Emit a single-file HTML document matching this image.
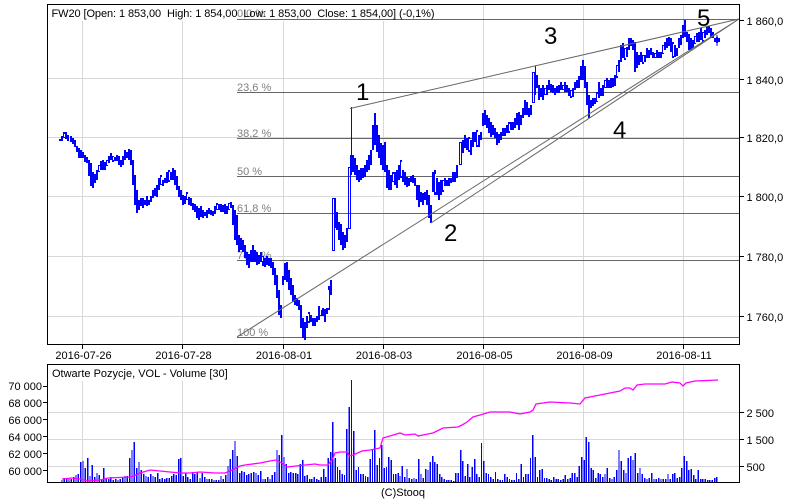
<!DOCTYPE html>
<html><head><meta charset="utf-8"><style>
html,body{margin:0;padding:0;background:#fff;width:800px;height:500px;overflow:hidden}
svg{display:block}
text{font-family:"Liberation Sans",Arial,sans-serif;font-size:11px;fill:#000;white-space:pre}
.f{fill:#808080}
.n{font-size:24px}
</style></head><body>
<svg width="800" height="500" viewBox="0 0 800 500">
<rect width="800" height="500" fill="#fff"/>
<!-- main grid -->
<path d="M82.5 5V344M182.5 5V344M283.5 5V344M383.5 5V344M483.5 5V344M583.5 5V344M683.5 5V344M48 78.5H739M48 137.5H739M48 196.5H739M48 256.5H739M48 316.5H739" stroke="#d8d8d8" stroke-width="1" fill="none"/>
<rect x="48" y="5" width="388" height="16" fill="#fff"/>
<!-- fib -->
<path d="M237 19.5H739M237 92.5H739M237 138.5H739M237 176.5H739M237 213.5H739M237 260.5H739M237 337.5H739" stroke="#666" stroke-width="1" fill="none"/>
<text class="f" x="237" y="17">0,0 %</text>
<text class="f" x="237" y="91">23,6 %</text>
<text class="f" x="237" y="137">38,2 %</text>
<text class="f" x="237" y="175">50 %</text>
<text class="f" x="237" y="212">61,8 %</text>
<text class="f" x="237" y="259">76,4 %</text>
<text class="f" x="237" y="336">100 %</text>
<!-- price -->
<path shape-rendering="crispEdges" fill="none" stroke="#0000ff" stroke-width="2" d="M60 139V141M62 136V141M64 132V138M66 132V139M68 135V141M71 136V142M73 138V144M75 140V147M77 146V152M79 148V158M81 150V158M83 152V158M85 155V162M87 157V163M89 160V176M91 163V186M93 172V188M95 174V183M97 170V180M99 165V172M101 161V170M103 160V170M105 162V170M107 160V166M109 156V163M111 153V160M113 156V162M115 157V161M117 155V161M119 156V165M121 160V167M123 156V165M125 150V160M127 152V158M129 149V160M131 150V165M133 160V185M135 175V205M137 190V213M139 200V210M141 198V206M143 198V208M145 200V205M147 196V206M149 200V205M151 196V202M153 190V198M155 188V196M157 185V197M159 178V190M161 175V185M163 180V186M165 178V183M167 172V183M169 170V182M171 172V180M173 168V180M175 170V185M177 176V190M179 186V197M181 190V200M183 195V205M185 196V204M187 192V200M189 197V205M191 198V206M193 203V210M195 204V212M197 206V218M199 208V220M201 206V217M203 210V218M205 212V216M207 210V218M209 208V214M211 210V215M213 211V216M215 206V214M217 203V210M219 204V210M221 204V212M223 205V212M225 204V214M227 206V214M229 203V210M231 202V208M233 205V225M235 210V240M237 215V245M239 235V252M241 238V250M243 240V252M245 245V258M247 252V265M249 254V268M251 250V262M253 245V262M255 250V262M257 252V265M259 255V264M261 252V262M263 256V266M265 258V267M267 256V265M269 258V266M271 258V268M273 262V275M275 268V285M277 275V298M279 290V315M281 305V318M283 276V285M285 263V280M287 262V282M289 270V290M291 278V295M293 285V302M295 295V305M297 298V306M299 300V310M301 305V328M303 318V338M305 322V340M307 316V328M309 312V323M311 315V322M313 318V326M315 318V326M317 316V322M319 306V320M321 310V316M323 308V316M325 309V322M327 308V314M329 286V310M331 280V295"/>
<path shape-rendering="crispEdges" fill="none" stroke="#0000ff" stroke-width="2" d="M335 198V228M337 212V230M339 222V240M341 224V245M343 232V250M345 235V248M347 228V242M351 155V175M353 155V172M355 158V175M357 165V180M359 170V182M361 168V180M363 168V178M365 165V177M367 160V172M369 155V170M371 150V165M373 125V150M375 113V145M377 125V152M379 135V158M381 143V165M383 145V170M385 142V172M387 165V188M389 170V190M391 175V190M393 172V182M395 172V185M397 170V188M399 165V180M401 160V178M403 170V182M405 172V185M407 177V187M409 178V186M411 176V182M413 175V183M415 178V186M417 185V200M419 185V207M421 192V202M423 193V205M425 192V200M427 190V205M429 195V218M431 205V223M433 172V192M435 170V195M437 178V195M439 182V200M441 180V195M443 180V192M445 178V186M447 180V186M449 178V186M451 178V183M453 172V182M455 172V182M457 165V178M463 140V153M465 135V148M467 138V150M469 137V152M471 140V155M473 132V147M475 132V142M477 130V147M479 135V147M481 132V140M483 113V126M485 110V125M487 115V128M489 118V133M491 122V137M493 125V135M495 128V138M497 132V145M499 134V143M501 132V140M503 128V136M505 128V136M507 125V133M509 122V133M511 122V130M513 122V130M515 118V128M517 113V125M519 112V130M521 115V125M523 108V118M525 100V115M527 102V115M529 108V117M531 105V115M535 75V95M537 75V88M539 85V100M541 88V97M543 85V100M545 88V95M547 85V95M549 80V90M551 84V92M553 85V93M555 88V95M557 86V93M559 85V93M561 82V90M563 85V90M565 82V92M567 85V92M569 88V96M571 90V98M573 88V97M575 82V90M577 80V88M579 76V88M581 66V80M583 60V80M585 66V88M587 82V105M589 95V118M591 100V108M593 98V106M595 98V104M597 92V102M599 82V98M601 88V96M603 85V96M605 80V88M607 78V88M609 80V88M611 78V88M613 78V87M615 75V86M617 65V78M619 60V72M621 45V62M623 43V58M625 48V60M627 47V57M629 38V50M631 38V46M633 40V50M635 42V72M637 52V68M639 55V65M641 52V62M643 55V64M645 55V62M647 48V58M649 50V58M651 48V55M653 52V58M655 53V58M657 50V58M659 52V58M661 52V58M663 45V54M665 42V50M667 38V48M669 37V46M671 38V52M673 42V58M675 45V57M677 48V56M679 38V48M681 35V45M683 25V38M685 20V37M687 32V42M689 34V50M691 38V50M693 40V48M695 36V44M697 33V42M699 32V42M701 28V40M703 32V42M705 30V38M707 26V35M709 26V33M711 28V38M713 32V38M715 38V42M717 37V43M719 38V42"/>
<path shape-rendering="crispEdges" fill="none" stroke="#0000ff" stroke-width="1" d="M332.5 198.5h2v52h-2zM348.5 167.5h2v61h-2zM459.5 142.5h2v22h-2zM532.5 72.5h2v30h-2zM717 35V46M351.5 107V155M535.5 66V75"/>
<!-- hollow candle centres -->
<path shape-rendering="crispEdges" fill="none" stroke="#fff" stroke-width="1" d="M64.5 134V137M99.5 166V171M107.5 161V165M113.500 157V160M161.500 177V184M169.500 172V180M187.500 194V199M217.500 205V209M229.500 204V209M262.500 257V261M308.500 314V321M320.500 307V315M328.500 290V308M393.500 174V181M401.500 162V176M435.500 174V192M443.500 181V190M469.500 139V150M477.500 132V145M509.500 124V131M545.500 89V94M563.500 86V89M571.500 91V96M597.500 94V101M605.500 81V87M617.500 66V76M625.500 49V58M643.500 56V62M655.500 54V57M663.500 46V53M673.500 44V56M695.500 37V43M703.500 33V40"/>
<!-- trend lines -->
<path d="M350 108.5L739 19M237 337L739 19M431 223L739 19" stroke="#666" stroke-width="1" fill="none"/>
<!-- frame -->
<rect x="47.5" y="4.5" width="692" height="340" fill="none" stroke="#000"/>
<path d="M82.5 345V349M182.5 345V349M283.5 345V349M383.5 345V349M483.5 345V349M583.5 345V349M683.5 345V349M740 20.5H744M740 79.5H744M740 137.5H744M740 196.5H744M740 256.5H744M740 316.5H744" stroke="#000" fill="none"/>
<text x="51.5" y="17" textLength="383" lengthAdjust="spacing">FW20 [Open: 1 853,00  High: 1 854,00  Low: 1 853,00  Close: 1 854,00] (-0,1%)</text>
<text x="746.500" y="25">1 860,0</text>
<text x="746.500" y="84">1 840,0</text>
<text x="746.500" y="142">1 820,0</text>
<text x="746.500" y="201">1 800,0</text>
<text x="746.500" y="261">1 780,0</text>
<text x="746.500" y="321">1 760,0</text>
<text x="83.5" y="359" text-anchor="middle">2016-07-26</text>
<text x="183.5" y="359" text-anchor="middle">2016-07-28</text>
<text x="284" y="359" text-anchor="middle">2016-08-01</text>
<text x="384" y="359" text-anchor="middle">2016-08-03</text>
<text x="484.500" y="359" text-anchor="middle">2016-08-05</text>
<text x="584.500" y="359" text-anchor="middle">2016-08-09</text>
<text x="684" y="359" text-anchor="middle">2016-08-11</text>
<!-- wave numbers -->
<text class="n" x="356" y="100">1</text>
<text class="n" x="444" y="241">2</text>
<text class="n" x="544" y="44">3</text>
<text class="n" x="613" y="138">4</text>
<text class="n" x="697" y="26">5</text>
<!-- lower panel -->
<path d="M82.5 365V482M182.5 365V482M283.5 365V482M383.5 365V482M483.5 365V482M583.5 365V482M683.5 365V482M48 412.500H739M48 439.500H739M48 466.500H739" stroke="#d8d8d8" fill="none"/>
<rect x="48" y="365" width="180" height="16" fill="#fff"/>
<path shape-rendering="crispEdges" fill="none" stroke="#0000ff" stroke-width="1.4" d="M62 482v-2v2m2.33 0v-4v4m2.33 0v-3v3m2.33 0v-4v4m2.33 0v-3v3m2.33 0v-5v5m2.33 0v-7v7m2.33 0v-8v8m2.33 0v-20v20m2.33 0v-21v21m2.33 0v-14v14m2.33 0v-24v24m2.33 0v-6v6m2.33 0v-17v17m2.33 0v-5v5m2.33 0v-9v9m2.33 0v-7v7m2.33 0v-3v3m2.33 0v-14v14m2.33 0v-3v3m2.33 0v-3v3m2.33 0v-5v5m2.33 0v-2v2m2.33 0v-3v3
M118 482v-2v2m2.33 0v-3v3m2.33 0v-5v5m2.33 0v-6v6m2.33 0v-6v6m2.33 0v-24v24m2.33 0v-32v32m2.33 0v-40v40m2.33 0v-14v14m2.33 0v-20v20m2.33 0v-12v12m2.33 0v-8v8m2.33 0v-6v6m2.33 0v-5v5m2.33 0v-8v8m2.33 0v-6v6m2.33 0v-5v5m2.33 0v-9v9m2.33 0v-3v3m2.33 0v-4v4m2.33 0v-3v3m2.33 0v-4v4m2.33 0v-4v4m2.33 0v-6v6m2.33 0v-8v8m2.33 0v-7v7m2.33 0v-23v23m2.33 0v-24v24m2.33 0v-6v6m2.33 0v-9v9m2.33 0v-5v5m2.33 0v-3v3m2.33 0v-10v10m2.33 0v-8v8m2.33 0v-10v10
M200 482v-4v4m2.33 0v-9v9m2.33 0v-5v5m2.33 0v-3v3m2.33 0v-3v3m2.33 0v-3v3m2.33 0v-2v2m2.33 0v-2v2m2.33 0v-2v2m2.33 0v-6v6m2.33 0v-3v3m2.33 0v-7v7m2.33 0v-16v16m2.33 0v-23v23m2.33 0v-32v32m2.33 0v-41v41m2.33 0v-26v26m2.33 0v-9v9m2.33 0v-11v11m2.33 0v-10v10m2.33 0v-7v7m2.33 0v-8v8m2.33 0v-9v9m2.33 0v-10v10
M256 482v-9v9m2.33 0v-7v7m2.33 0v-11v11m2.33 0v-3v3m2.33 0v-3v3m2.33 0v-5v5m2.33 0v-3v3m2.33 0v-7v7m2.33 0v-10v10m2.33 0v-32v32m2.33 0v-27v27m2.33 0v-47v47m2.33 0v-25v25m2.33 0v-18v18m2.33 0v-9v9m2.33 0v-10v10m2.33 0v-9v9m2.33 0v-9v9m2.33 0v-8v8m2.33 0v-18v18m2.33 0v-22v22m2.33 0v-6v6m2.33 0v-7v7m2.33 0v-3v3m2.33 0v-3v3m2.33 0v-5v5m2.33 0v-3v3m2.33 0v-2v2m2.33 0v-5v5m2.33 0v-13v13m2.33 0v-5v5m2.33 0v-24v24m2.33 0v-30v30m2.33 0v-60v60m2.33 0v-24v24m2.33 0v-15v15m2.33 0v-12v12m2.33 0v-8v8m2.33 0v-7v7m2.33 0v-53v53m2.33 0v-75v75m2.33 0v-102v102m2.33 0v-51v51m2.33 0v-12v12m2.33 0v-15v15m2.33 0v-8v8m2.33 0v-8v8m2.33 0v-6v6m2.33 0v-5v5m2.33 0v-23v23m2.33 0v-33v33m2.33 0v-52v52m2.33 0v-17v17m2.33 0v-24v24m2.33 0v-37v37m2.33 0v-14v14m2.33 0v-15v15m2.33 0v-25v25m2.33 0v-22v22m2.33 0v-8v8m2.33 0v-8v8m2.33 0v-9v9
M400 482v-6v6m2.33 0v-16v16m2.33 0v-5v5m2.33 0v-13v13m2.33 0v-4v4m2.33 0v-3v3m2.33 0v-4v4m2.33 0v-3v3m2.33 0v-23v23m2.33 0v-8v8m2.33 0v-4v4m2.33 0v-13v13m2.33 0v-12v12m2.33 0v-20v20m2.33 0v-26v26m2.33 0v-20v20m2.33 0v-18v18m2.33 0v-8v8m2.33 0v-5v5m2.33 0v-3v3m2.33 0v-2v2m2.33 0v-2v2m2.33 0v-2v2m2.33 0v-1v1m2.33 0v-9v9m2.33 0v-9v9m2.33 0v-32v32m2.33 0v-21v21m2.33 0v-6v6m2.33 0v-18v18m2.33 0v-5v5m2.33 0v-15v15m2.33 0v-23v23m2.33 0v-8v8m2.33 0v-5v5m2.33 0v-39v39m2.33 0v-21v21m2.33 0v-9v9m2.33 0v-8v8m2.33 0v-5v5m2.33 0v-3v3m2.33 0v-10v10m2.33 0v-3v3m2.33 0v-2v2m2.33 0v-2v2m2.33 0v-8v8m2.33 0v-5v5m2.33 0v-3v3m2.33 0v-2v2m2.33 0v-2v2m2.33 0v-9v9m2.33 0v-3v3m2.33 0v-18v18m2.33 0v-5v5m2.33 0v-8v8m2.33 0v-8v8m2.33 0v-24v24m2.33 0v-47v47m2.33 0v-25v25m2.33 0v-5v5m2.33 0v-12v12m2.33 0v-13v13m2.33 0v-4v4m2.33 0v-4v4m2.33 0v-3v3m2.33 0v-2v2m2.33 0v-5v5m2.33 0v-3v3m2.33 0v-3v3m2.33 0v-2v2m2.33 0v-3v3m2.33 0v-7v7m2.33 0v-3v3m2.33 0v-4v4m2.33 0v-9v9m2.33 0v-9v9m2.33 0v-5v5m2.33 0v-16v16m2.33 0v-25v25m2.33 0v-22v22m2.33 0v-45v45m2.33 0v-40v40m2.33 0v-14v14m2.33 0v-12v12m2.33 0v-4v4m2.33 0v-9v9m2.33 0v-8v8m2.33 0v-5v5m2.33 0v-8v8m2.33 0v-14v14m2.33 0v-4v4m2.33 0v-3v3m2.33 0v-5v5m2.33 0v-12v12m2.33 0v-32v32m2.33 0v-21v21m2.33 0v-12v12m2.33 0v-9v9m2.33 0v-24v24m2.33 0v-26v26m2.33 0v-22v22m2.33 0v-29v29m2.33 0v-9v9m2.33 0v-14v14m2.33 0v-8v8m2.33 0v-4v4m2.33 0v-3v3m2.33 0v-4v4m2.33 0v-9v9m2.33 0v-3v3m2.33 0v-3v3m2.33 0v-4v4m2.33 0v-3v3m2.33 0v-3v3m2.33 0v-3v3m2.33 0v-8v8m2.33 0v-3v3m2.33 0v-8v8m2.33 0v-9v9m2.33 0v-4v4m2.33 0v-5v5m2.33 0v-14v14m2.33 0v-26v26m2.33 0v-21v21m2.33 0v-12v12m2.33 0v-13v13m2.33 0v-7v7m2.33 0v-3v3m2.33 0v-12v12m2.33 0v-3v3m2.33 0v-3v3m2.33 0v-3v3m2.33 0v-2v2m2.33 0v-2v2m2.33 0v-2v2m2.33 0v-4v4m2.33 0v-5v5"/>
<polyline fill="none" stroke="#ff00ff" stroke-width="1.3" points="62,479 72,478 80,479 88,481 100,480 108,478 130,477 134,476 140,473 150,470 160,471 170,472 180,473 190,473 200,472 215,473 225,473 232,470 240,466 245,465 260,463 270,461 276,460 282,463 287,467 296,466 305,465 315,464 320,465 328,465 333,458 335,453 340,452 347,452 349,456 353,455 362,451 370,450 380,448 383,438 390,436 400,433 405,435 415,434 418,436 428,434 433,433 437,431 443,428 458,427 462,425 467,422 473,417 480,415 490,412 510,412 520,414 530,412 533,410 536,404 550,402 570,403 580,404 585,398 595,396 610,393 620,391 625,388 630,388 633,390 637,385 645,384 665,384 672,382 680,383 683,386 686,383 695,381 718,380"/>
<rect x="47.5" y="364.5" width="692" height="118" fill="none" stroke="#000"/>
<path d="M43 386.500H47M43 402.500H47M43 419.500H47M43 436.500H47M43 453.500H47M43 470.500H47M740 412.500H744M740 439.500H744M740 466.500H744" stroke="#000" fill="none"/>
<text x="52" y="377">Otwarte Pozycje, VOL - Volume [30]</text>
<text x="42" y="390" text-anchor="end">70 000</text>
<text x="42" y="407" text-anchor="end">68 000</text>
<text x="42" y="424" text-anchor="end">66 000</text>
<text x="42" y="441" text-anchor="end">64 000</text>
<text x="42" y="458" text-anchor="end">62 000</text>
<text x="42" y="475" text-anchor="end">60 000</text>
<text x="746.500" y="417">2 500</text>
<text x="746.500" y="444">1 500</text>
<text x="746.500" y="471">500</text>
<text x="381" y="496">(C)Stooq</text>
</svg>
</body></html>
